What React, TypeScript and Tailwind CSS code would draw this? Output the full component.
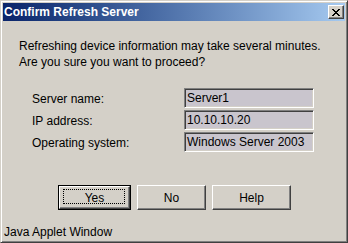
import React from "react";

const font = { fontFamily: '"Liberation Sans", Arial, sans-serif' };

function Field({ value }: { value: string }) {
  return (
    <div className="h-[20px] w-[130px] bg-[#c9c5cd] border border-t-[#808080] border-l-[#808080] border-r-[#ffffff] border-b-[#ffffff] shadow-[inset_1px_1px_#404040,inset_-1px_-1px_#d4d0c8] flex items-center pl-[2px] text-[12px] leading-[16px] text-black whitespace-nowrap overflow-hidden">
      {value}
    </div>
  );
}

function Btn({ label, w, def }: { label: string; w: string; def?: boolean }) {
  if (def) {
    return (
      <div className={`${w} h-[25px] border border-black`}>
        <div className="relative w-full h-full bg-[#d4d0c8] border border-t-[#ffffff] border-l-[#ffffff] border-r-[#404040] border-b-[#404040] shadow-[inset_-1px_-1px_#808080] flex items-center justify-center text-[12px] text-black">
          <div className="absolute left-[3px] top-[2px] right-[4px] bottom-[4px] border border-dotted border-black" />
          <span className="relative">{label}</span>
        </div>
      </div>
    );
  }
  return (
    <div className={`${w} h-[25px] bg-[#d4d0c8] border border-t-[#ffffff] border-l-[#ffffff] border-r-[#404040] border-b-[#404040] shadow-[inset_-1px_-1px_#808080,inset_1px_1px_#d4d0c8] flex items-center justify-center text-[12px] text-black`}>
      {label}
    </div>
  );
}

export default function App() {
  return (
    <div style={font} className="w-[348px] h-[243px] bg-[#d4d0c8] border border-t-[#d4d0c8] border-l-[#d4d0c8] border-r-[#404040] border-b-[#404040] shadow-[inset_1px_1px_#ffffff,inset_-1px_-1px_#808080] p-[2px] flex flex-col">
      {/* title bar */}
      <div className="h-[18px] bg-linear-to-r from-[#0a246a] to-[#a6caf0] flex items-center justify-between pl-[1px] pr-[1px]">
        <span className="text-white font-bold text-[12px] leading-[16px] whitespace-nowrap">Confirm Refresh Server</span>
        <div className="w-[16px] h-[14px] bg-[#d4d0c8] border border-t-[#ffffff] border-l-[#ffffff] border-r-[#404040] border-b-[#404040] shadow-[inset_-1px_-1px_#808080] flex items-center justify-center">
          <svg width="8" height="7" viewBox="0 0 8 7" shapeRendering="crispEdges">
            <path d="M0 0h2v1h-2zM6 0h2v1h-2zM1 1h2v1h-2zM5 1h2v1h-2zM2 2h4v1h-4zM3 3h2v1h-2zM2 4h4v1h-4zM1 5h2v1h-2zM5 5h2v1h-2zM0 6h2v1h-2zM6 6h2v1h-2z" fill="#000" />
          </svg>
        </div>
      </div>

      {/* message */}
      <div className="pt-[17px] pl-[16px] text-[12px] leading-[16px] text-black">
        <div className="whitespace-nowrap">Refreshing device information may take several minutes.</div>
        <div className="whitespace-nowrap">Are you sure you want to proceed?</div>
      </div>

      {/* fields */}
      <div className="mt-[18px] pl-[29px] flex flex-col gap-[2px]">
        {[
          ["Server name:", "Server1"],
          ["IP address:", "10.10.10.20"],
          ["Operating system:", "Windows Server 2003"],
        ].map(([l, v]) => (
          <div key={l} className="flex items-center h-[20px]">
            <div className="w-[152px] text-[12px] leading-[16px] text-black pt-[2px] whitespace-nowrap">{l}</div>
            <Field value={v} />
          </div>
        ))}
      </div>

      {/* buttons */}
      <div className="mt-[33px] flex justify-center gap-[6px] pl-[1px]">
        <Btn label="Yes" w="w-[73px]" def />
        <Btn label="No" w="w-[69px]" />
        <Btn label="Help" w="w-[79px]" />
      </div>

      {/* status */}
      <div className="mt-[14px] pl-[1px] text-[12px] leading-[16px] text-black whitespace-nowrap">Java Applet Window</div>
    </div>
  );
}
